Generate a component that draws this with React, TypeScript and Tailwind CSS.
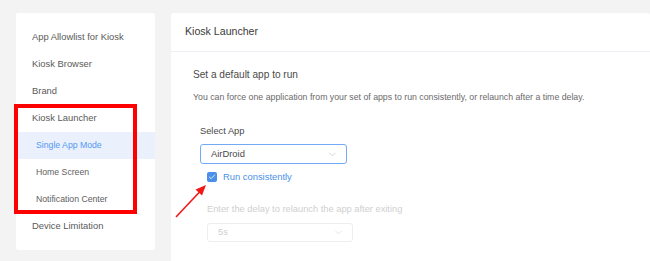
import { ChevronDown, Check } from "lucide-react";

const menu = [
  { label: "App Allowlist for Kiosk", sub: false },
  { label: "Kiosk Browser", sub: false },
  { label: "Brand", sub: false },
  { label: "Kiosk Launcher", sub: false },
  { label: "Single App Mode", sub: true, active: true },
  { label: "Home Screen", sub: true },
  { label: "Notification Center", sub: true },
  { label: "Device Limitation", sub: false },
];

export default function App() {
  return (
    <div
      className="relative flex h-[261px] w-[650px] overflow-hidden bg-[#f3f3f3] pl-[16px] pt-[13px]"
      style={{ fontFamily: '"Liberation Sans", Arial, sans-serif' }}
    >
      {/* sidebar */}
      <div className="h-[237px] w-[139px] shrink-0 rounded-[2px] bg-white pt-[11px]">
        {menu.map((m) => (
          <div
            key={m.label}
            className={`flex h-[27px] items-center ${m.sub ? "pl-[20px] text-[8.7px]" : "pl-[16px] text-[9.4px]"} ${
              m.active ? "bg-[#eaf1fd] text-[#5497f3]" : m.sub ? "text-[#606060]" : "text-[#5a5a5a]"
            }`}
          >
            {m.label}
          </div>
        ))}
      </div>

      {/* main */}
      <div className="ml-[16px] flex-1 rounded-t-[2px] bg-white">
        <div className="flex h-[39px] items-center border-b border-[#edf0f4] pl-[14px] text-[10.6px] text-[#3a3a3a]">
          Kiosk Launcher
        </div>
        <div className="pl-[22px]">
          <div className="mt-[16px] flex h-[14px] items-center text-[10.1px] text-[#4a4a4a]">
            Set a default app to run
          </div>
          <div className="mt-[10px] flex h-[12px] items-center text-[8.75px] text-[#6a6a6a]">
            You can force one application from your set of apps to run consistently, or relaunch after a time delay.
          </div>

          <div className="pl-[7px]">
            <div className="mt-[21px] flex h-[14px] items-center text-[9.3px] text-[#4a4a4a]">Select App</div>
            <div className="mt-[5px] flex h-[20px] w-[147px] items-center justify-between rounded-[3px] border border-[#74aaf4] pl-[10px] pr-[8px] text-[9.4px] text-[#4a4a4a]">
              <span>AirDroid</span>
              <ChevronDown size={11} strokeWidth={1.5} className="text-[#c4c4c4]" />
            </div>

            <div className="pl-[7px]">
              <div className="mt-[6px] flex h-[14px] items-center gap-[6px]">
                <div className="flex h-[10px] w-[10px] items-center justify-center rounded-[2px] bg-[#4a90e8]">
                  <Check size={8} strokeWidth={2.5} className="text-white" />
                </div>
                <span className="text-[9.4px] text-[#4a90e8]">Run consistently</span>
              </div>

              <div className="mt-[19px] flex h-[14px] items-center text-[9.3px] text-[#cfcfcf]">
                Enter the delay to relaunch the app after exiting
              </div>
              <div className="mt-[6px] flex h-[19px] w-[146px] items-center justify-between rounded-[3px] border border-[#eeeeee] pl-[10px] pr-[8px] text-[9.4px] text-[#cfcfcf]">
                <span>5s</span>
                <ChevronDown size={11} strokeWidth={1.5} className="text-[#d8d8d8]" />
              </div>
            </div>
          </div>
        </div>
      </div>

      {/* annotation: red box */}
      <div className="absolute left-[14px] top-[104px] h-[110px] w-[123px] border-[4px] border-[#ff0000]" />

      {/* annotation: red arrow */}
      <svg className="absolute left-0 top-0" width="650" height="261" viewBox="0 0 650 261">
        <line x1="176" y1="217" x2="200" y2="191.5" stroke="#f01818" strokeWidth="1.6" />
        <polygon points="206,185 195.5,189.5 202,195.5" fill="#f01818" />
      </svg>
    </div>
  );
}
